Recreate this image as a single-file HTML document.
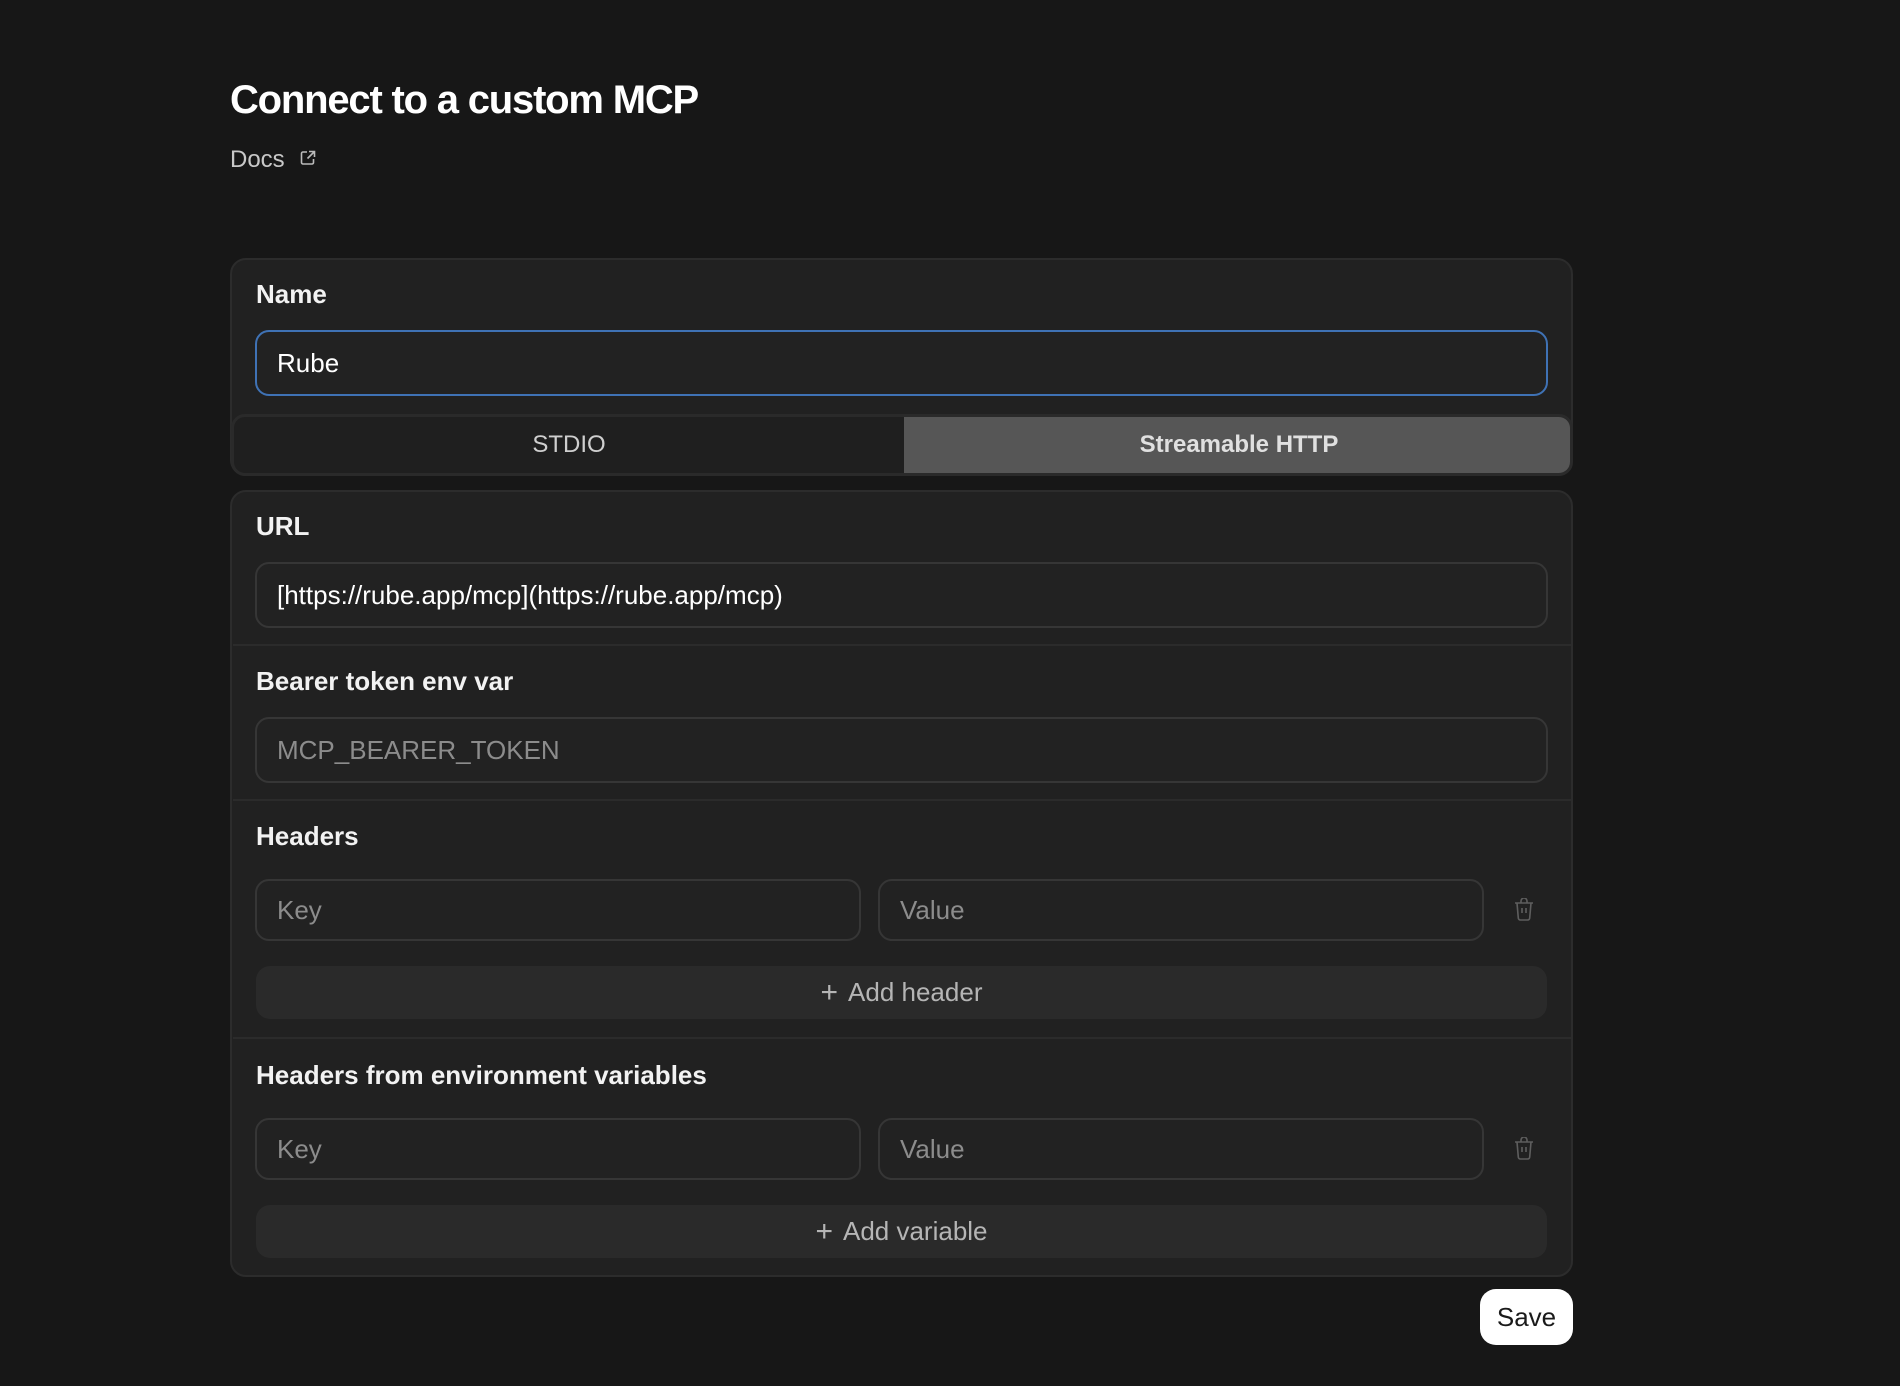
<!DOCTYPE html>
<html><head><meta charset="utf-8"><style>
*{box-sizing:border-box;margin:0;padding:0}
body{width:1900px;height:1386px;background:#171717;font-family:"Liberation Sans",sans-serif;color:#fff;position:relative;overflow:hidden}
.a{position:absolute}
.card{position:absolute;background:#212121;border:2px solid #2c2c2c;border-radius:16px}
.lbl{position:absolute;font-size:26px;font-weight:bold;color:#f2f2f2;left:256px}
.inp{position:absolute;background:#222;border:2px solid #363636;border-radius:14px;font-size:26px;padding-left:20px;display:flex;align-items:center}
.ph{color:#8c8c8c}
.btn{position:absolute;left:256px;width:1291px;height:53px;background:#2a2a2a;border-radius:14px;display:flex;align-items:center;justify-content:center;font-size:26px;color:#b5b5b5}
.div{position:absolute;left:233px;width:1338px;height:2px;background:#2b2b2b}
</style></head><body>
<div class="a" style="left:230px;top:78px;font-size:40px;font-weight:bold;letter-spacing:-1.2px">Connect to a custom MCP</div>
<div class="a" style="left:230px;top:146px;font-size:24px;color:#c8c8c8">Docs</div>
<svg class="a" style="left:299px;top:149px" width="18" height="18" viewBox="0 0 18 18" fill="none" stroke="#bbb" stroke-width="1.6"><path d="M8 3H4a1.5 1.5 0 0 0-1.5 1.5v9A1.5 1.5 0 0 0 4 15h9a1.5 1.5 0 0 0 1.5-1.5V10M10 2.5h5.5V8M15.5 2.5L8.5 9.5"/></svg>

<div class="card" style="left:230px;top:258px;width:1343px;height:218px"></div>
<div class="lbl" style="top:279px">Name</div>
<div class="inp" style="left:255px;top:330px;width:1293px;height:66px;border-color:#3f72b5;color:#fff">Rube</div>
<div class="a" style="left:231px;top:414px;width:1342px;height:62px;background:#1f1f1f;border:3px solid #2a2a2a;border-radius:14px;overflow:hidden">
 <div class="a" style="left:0;top:0;width:670px;height:56px;display:flex;align-items:center;justify-content:center;font-size:24px;color:#cfcfcf">STDIO</div>
 <div class="a" style="left:670px;top:0;width:670px;height:56px;background:#565656;display:flex;align-items:center;justify-content:center;font-size:24px;font-weight:bold;color:#e0e0e0">Streamable HTTP</div>
</div>

<div class="card" style="left:230px;top:490px;width:1343px;height:787px"></div>
<div class="lbl" style="top:511px">URL</div>
<div class="inp" style="left:255px;top:562px;width:1293px;height:66px;color:#fff">[https://rube.app/mcp](https://rube.app/mcp)</div>
<div class="div" style="top:644px"></div>
<div class="lbl" style="top:666px">Bearer token env var</div>
<div class="inp ph" style="left:255px;top:717px;width:1293px;height:66px">MCP_BEARER_TOKEN</div>
<div class="div" style="top:799px"></div>
<div class="lbl" style="top:821px">Headers</div>
<div class="inp ph" style="left:255px;top:879px;width:606px;height:62px">Key</div>
<div class="inp ph" style="left:878px;top:879px;width:606px;height:62px">Value</div>
<svg class="a" style="left:1513px;top:898px" width="22" height="24" viewBox="0 0 22 24" fill="none" stroke="#5e5e5e" stroke-width="1.6"><path d="M2 5h18M8 5V3a3 3 0 0 1 6 0v2M4 5l1.3 15a2 2 0 0 0 2 2h7.4a2 2 0 0 0 2-2L18 5M9 10v5M13 10v5"/></svg>
<div class="btn" style="top:966px"><span style="font-size:30px;font-weight:300;margin-right:10px">+</span>Add header</div>
<div class="div" style="top:1037px"></div>
<div class="lbl" style="top:1060px">Headers from environment variables</div>
<div class="inp ph" style="left:255px;top:1118px;width:606px;height:62px">Key</div>
<div class="inp ph" style="left:878px;top:1118px;width:606px;height:62px">Value</div>
<svg class="a" style="left:1513px;top:1137px" width="22" height="24" viewBox="0 0 22 24" fill="none" stroke="#5e5e5e" stroke-width="1.6"><path d="M2 5h18M8 5V3a3 3 0 0 1 6 0v2M4 5l1.3 15a2 2 0 0 0 2 2h7.4a2 2 0 0 0 2-2L18 5M9 10v5M13 10v5"/></svg>
<div class="btn" style="top:1205px"><span style="font-size:30px;font-weight:300;margin-right:10px">+</span>Add variable</div>

<div class="a" style="left:1480px;top:1289px;width:93px;height:56px;background:#fff;border-radius:16px;display:flex;align-items:center;justify-content:center;font-size:26px;color:#1a1a1a">Save</div>
</body></html>
